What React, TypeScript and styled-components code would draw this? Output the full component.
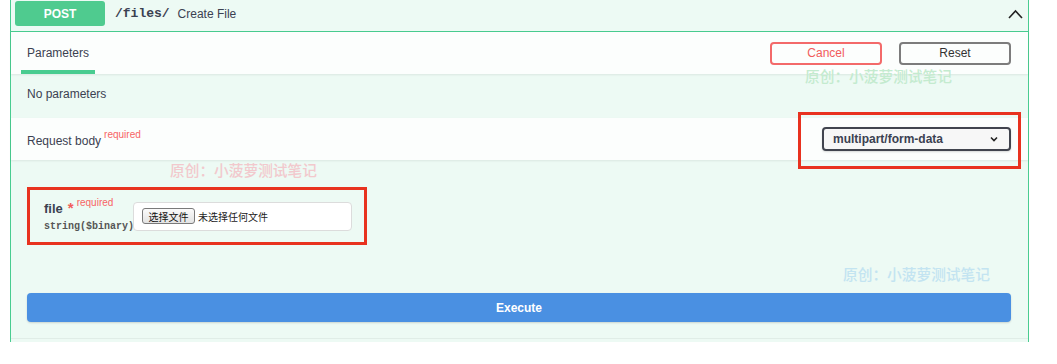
import React from 'react'
import styled, { createGlobalStyle } from 'styled-components'

const GlobalStyle = createGlobalStyle`
  html, body {
    margin: 0;
    padding: 0;
    background: #fff;
  }
  body {
    font-family: "Liberation Sans", Arial, "Noto Sans CJK SC", sans-serif;
    color: #3b4151;
  }
  * {
    box-sizing: border-box;
  }
`

const Opblock = styled.div`
  position: relative;
  width: 1019px;
  margin-left: 10px;
  border-left: 1px solid #49cc90;
  border-right: 1px solid #49cc90;
  background: #edfaf4;
  padding-bottom: 3px;
`

const Summary = styled.div`
  display: flex;
  align-items: center;
  height: 32px;
  padding: 1px 5px 5px 4px;
  border-bottom: 1px solid #49cc90;
`

const Method = styled.div`
  width: 90px;
  height: 25px;
  display: flex;
  align-items: center;
  justify-content: center;
  background: #4fcb8f;
  border-radius: 3px;
  color: #fff;
  font-weight: bold;
  font-size: 12px;
`

const Path = styled.span`
  margin-left: 10px;
  font-family: "Liberation Mono", "Courier New", monospace;
  font-weight: bold;
  font-size: 13px;
  color: #3b4151;
`

const Desc = styled.span`
  margin-left: 8px;
  font-size: 12px;
  color: #3b4151;
`

const Arrow = styled.svg`
  margin-left: auto;
  margin-top: 1px;
`

const SectionHeader = styled.div<{ $height: number }>`
  display: flex;
  align-items: center;
  height: ${p => p.$height}px;
  padding: 0 17px 0 16px;
  background: rgba(255, 255, 255, 0.82);
  box-shadow: 0 1px 2px rgba(0, 0, 0, 0.08);
  position: relative;
`

const Tab = styled.div`
  position: relative;
  align-self: stretch;
  display: flex;
  align-items: center;
  font-size: 12px;
  color: #3b4151;

  &::after {
    content: '';
    position: absolute;
    left: -6px;
    right: -6px;
    bottom: 0;
    height: 4px;
    background: #49cc90;
  }
`

const ButtonRow = styled.div`
  margin-left: auto;
  display: flex;
  gap: 17px;
`

const OutlineButton = styled.button<{ $danger?: boolean }>`
  width: 112px;
  height: 23px;
  border-radius: 4px;
  border: 2px solid ${p => (p.$danger ? '#f36a6a' : '#7c7c7c')};
  background: transparent;
  color: ${p => (p.$danger ? '#f25c5c' : '#333')};
  font-family: inherit;
  font-size: 12px;
  padding: 0;
`

const NoParams = styled.div`
  height: 44px;
  display: flex;
  align-items: center;
  padding: 0 16px 4px;
  font-size: 12px;
  color: #3b4151;
`

const Title = styled.div`
  font-size: 12px;
  color: #3b4151;
`

const Req = styled.sup`
  font-size: 10px;
  color: #f76464;
  margin-left: 3px;
  position: relative;
  top: -2px;
  font-weight: normal;
`

const SelectWrap = styled.div`
  position: relative;
  margin-left: auto;
  margin-top: 0;

  &::after {
    content: '';
    position: absolute;
    top: -15px;
    bottom: -18px;
    left: -24px;
    right: -10px;
    border: 3px solid #e8321f;
    pointer-events: none;
  }
`

const Select = styled.div`
  width: 189px;
  height: 24px;
  display: flex;
  align-items: center;
  justify-content: space-between;
  padding: 0 11px 0 9px;
  border: 2px solid #41444e;
  border-radius: 4px;
  background: #f7f7f7;
  box-shadow: 0 1px 2px rgba(0, 0, 0, 0.15);
  font-size: 12px;
  font-weight: bold;
  color: #3b4151;
`

const BodyArea = styled.div`
  padding: 27px 16px 0;
`

const FileRow = styled.div`
  width: 340px;
  height: 58px;
  display: flex;
  align-items: center;
  padding-left: 14px;
  border: 3px solid #e8321f;
`

const ParamCol = styled.div`
  width: 89px;
  display: flex;
  flex-direction: column;
  gap: 5px;
  margin-top: -1px;
`

const ParamName = styled.div`
  font-size: 13px;
  font-weight: 600;
  color: #3b4151;
  white-space: nowrap;
`

const Star = styled.span`
  color: #f25c5c;
  margin-left: 5px;
  font-size: 15px;
  font-weight: bold;
`

const ParamType = styled.div`
  font-family: "Liberation Mono", "Courier New", monospace;
  font-size: 10px;
  font-weight: bold;
  color: #555;
  white-space: nowrap;
`

const FileInput = styled.div`
  width: 219px;
  height: 29px;
  display: flex;
  align-items: center;
  gap: 3px;
  padding: 0 8px;
  background: #fff;
  border: 1px solid #dcdcdc;
  border-radius: 4px;
  font-family: "Noto Sans CJK SC", sans-serif;
  font-size: 10px;
  color: #222;
`

const ChooseButton = styled.span`
  width: 53px;
  height: 16px;
  display: flex;
  align-items: center;
  justify-content: center;
  border: 1px solid #7a7a7a;
  border-radius: 3px;
  background: linear-gradient(#fbfbfb, #e3e3e3);
  color: #111;
`

const ExecuteWrap = styled.div`
  padding: 48px 17px 16px 16px;
  border-bottom: 1px solid rgba(0, 0, 0, 0.05);
`

const Execute = styled.button`
  width: 100%;
  height: 29px;
  border: none;
  border-radius: 4px;
  background: #4a90e2;
  box-shadow: 0 1px 2px rgba(0, 0, 0, 0.15);
  color: #fff;
  font-family: inherit;
  font-weight: bold;
  font-size: 12px;
`

const Watermark = styled.div<{ $color: string; $x: number; $y: number }>`
  position: absolute;
  left: ${p => p.$x}px;
  top: ${p => p.$y}px;
  font-family: "Noto Sans CJK SC", sans-serif;
  font-size: 14.7px;
  font-weight: 500;
  line-height: 1;
  color: ${p => p.$color};
  white-space: nowrap;
  pointer-events: none;
`

const mark = '原创：小菠萝测试笔记'

export default function App() {
  return (
    <>
      <GlobalStyle />
      <Opblock>
        <Summary>
          <Method>POST</Method>
          <Path>/files/</Path>
          <Desc>Create File</Desc>
          <Arrow width="15" height="10" viewBox="0 0 15 10">
            <polyline points="1,9 7.5,2 14,9" fill="none" stroke="#222" strokeWidth="1.6" />
          </Arrow>
        </Summary>

        <SectionHeader $height={42}>
          <Tab>Parameters</Tab>
          <ButtonRow>
            <OutlineButton $danger>Cancel</OutlineButton>
            <OutlineButton>Reset</OutlineButton>
          </ButtonRow>
        </SectionHeader>

        <NoParams>No parameters</NoParams>

        <SectionHeader $height={42}>
          <Title>
            Request body<Req>required</Req>
          </Title>
          <SelectWrap>
            <Select>
              <span>multipart/form-data</span>
              <svg width="8" height="6" viewBox="0 0 8 6">
                <polyline points="1,1.5 4,4.5 7,1.5" fill="none" stroke="#222" strokeWidth="1.6" />
              </svg>
            </Select>
          </SelectWrap>
        </SectionHeader>

        <BodyArea>
          <FileRow>
            <ParamCol>
              <ParamName>
                file<Star>*</Star>
                <Req>required</Req>
              </ParamName>
              <ParamType>string($binary)</ParamType>
            </ParamCol>
            <FileInput>
              <ChooseButton>选择文件</ChooseButton>
              <span>未选择任何文件</span>
            </FileInput>
          </FileRow>
        </BodyArea>

        <ExecuteWrap>
          <Execute>Execute</Execute>
        </ExecuteWrap>

        <Watermark $color="#c4ebcf" $x={794} $y={69}>{mark}</Watermark>
        <Watermark $color="#f2c9cd" $x={159} $y={163}>{mark}</Watermark>
        <Watermark $color="#c3e4f1" $x={832} $y={267}>{mark}</Watermark>
      </Opblock>
    </>
  )
}
